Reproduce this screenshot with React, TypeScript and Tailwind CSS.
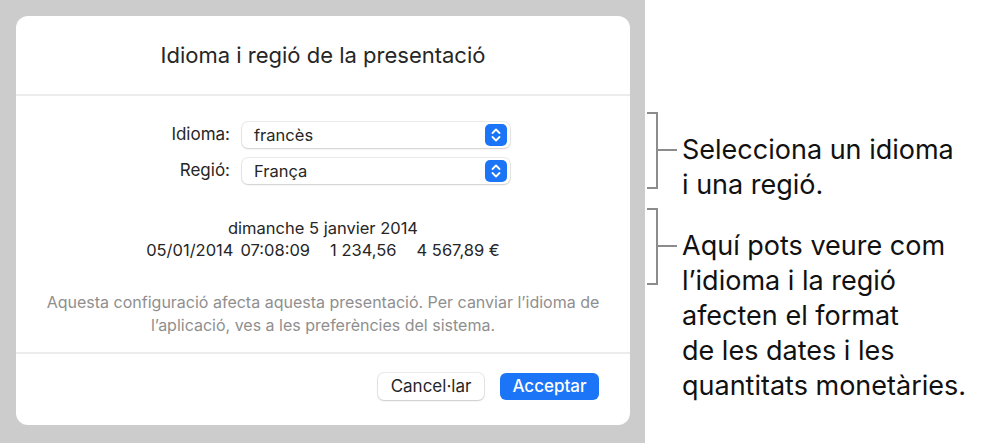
const font = { fontFamily: 'Inter, "Noto Sans", sans-serif' }

function Stepper() {
  return (
    <span className="flex h-[22px] w-[22px] items-center justify-center rounded-[5px] bg-[#1c74f6]">
      <svg width="12" height="16" viewBox="0 0 12 16" fill="none">
        <path d="M2.5 6 6 2.5 9.5 6" stroke="white" strokeWidth="1.8" strokeLinecap="round" strokeLinejoin="round" />
        <path d="M2.5 10 6 13.5 9.5 10" stroke="white" strokeWidth="1.8" strokeLinecap="round" strokeLinejoin="round" />
      </svg>
    </span>
  )
}

function SelectRow({ label, value }: { label: string; value: string }) {
  return (
    <div className="flex items-center">
      <div className="w-[226px] pr-[12px] text-right text-[17px] text-[#262626]">{label}</div>
      <div className="flex h-[26px] w-[268px] items-center justify-between rounded-[6px] bg-white pl-[12px] pr-[3px] shadow-[0_0_0_1px_rgba(0,0,0,0.08),0_1px_2px_rgba(0,0,0,0.12)]">
        <span className="text-[16.5px] text-[#262626]">{value}</span>
        <Stepper />
      </div>
    </div>
  )
}

function Bracket() {
  return (
    <div className="relative h-[77px] w-[32px] shrink-0">
      <div className="absolute left-[2px] top-0 h-[2px] w-[11px] bg-[#8c8c8c]" />
      <div className="absolute left-[11px] top-0 h-[77px] w-[2px] bg-[#8c8c8c]" />
      <div className="absolute left-[2px] bottom-0 h-[2px] w-[11px] bg-[#8c8c8c]" />
      <div className="absolute left-[11px] top-[37px] h-[2px] w-[21px] bg-[#8c8c8c]" />
    </div>
  )
}

export default function App() {
  return (
    <div className="flex h-[443px] w-[985px] bg-white" style={font}>
      <div className="h-[443px] w-[645px] shrink-0 bg-[#cccccc] pl-[16px] pt-[16px]">
        <div className="flex h-[409px] w-[614px] flex-col rounded-[12px] bg-white">
          <div className="flex h-[78px] items-center justify-center text-[22px] text-[#262626]">
            Idioma i regió de la presentació
          </div>
          <div className="h-[2px] bg-[#ececec]" />
          <div className="flex flex-col gap-[10px] pt-[26px]">
            <SelectRow label="Idioma:" value="francès" />
            <SelectRow label="Regió:" value="França" />
          </div>
          <div className="pt-[33px] text-center text-[16.5px] leading-[22px] text-[#262626]">
            <div>dimanche 5 janvier 2014</div>
            <div className="flex justify-center gap-[20px]">
              <span className="flex gap-[7px]">
                <span>05/01/2014</span>
                <span>07:08:09</span>
              </span>
              <span>1 234,56</span>
              <span>4 567,89 €</span>
            </div>
          </div>
          <div className="pt-[30px] text-center text-[16px] leading-[23px] text-[#8f8f8f]">
            <div>Aquesta configuració afecta aquesta presentació. Per canviar l’idioma de</div>
            <div>l’aplicació, ves a les preferències del sistema.</div>
          </div>
          <div className="mt-[15px] h-[2px] bg-[#ececec]" />
          <div className="flex justify-end gap-[16px] pr-[31px] pt-[19px]">
            <button className="h-[27px] w-[106px] rounded-[6px] bg-white text-[17px] text-[#262626] shadow-[0_0_0_1px_rgba(0,0,0,0.08),0_1px_2px_rgba(0,0,0,0.14)]">
              Cancel·lar
            </button>
            <button className="h-[27px] w-[99px] rounded-[6px] bg-[#1c74f6] text-[17px] font-medium text-white">
              Acceptar
            </button>
          </div>
        </div>
      </div>
      <div className="flex flex-col pt-[112px] text-[27px] leading-[35px] text-[#111111]">
        <div className="flex">
          <Bracket />
          <div className="mt-[20px] pl-[5px]">
            <div>Selecciona un idioma</div>
            <div>i una regió.</div>
          </div>
        </div>
        <div className="mt-[6px] flex">
          <Bracket />
          <div className="mt-[20px] pl-[5px]">
            <div>Aquí pots veure com</div>
            <div>l’idioma i la regió</div>
            <div>afecten el format</div>
            <div>de les dates i les</div>
            <div>quantitats monetàries.</div>
          </div>
        </div>
      </div>
    </div>
  )
}
